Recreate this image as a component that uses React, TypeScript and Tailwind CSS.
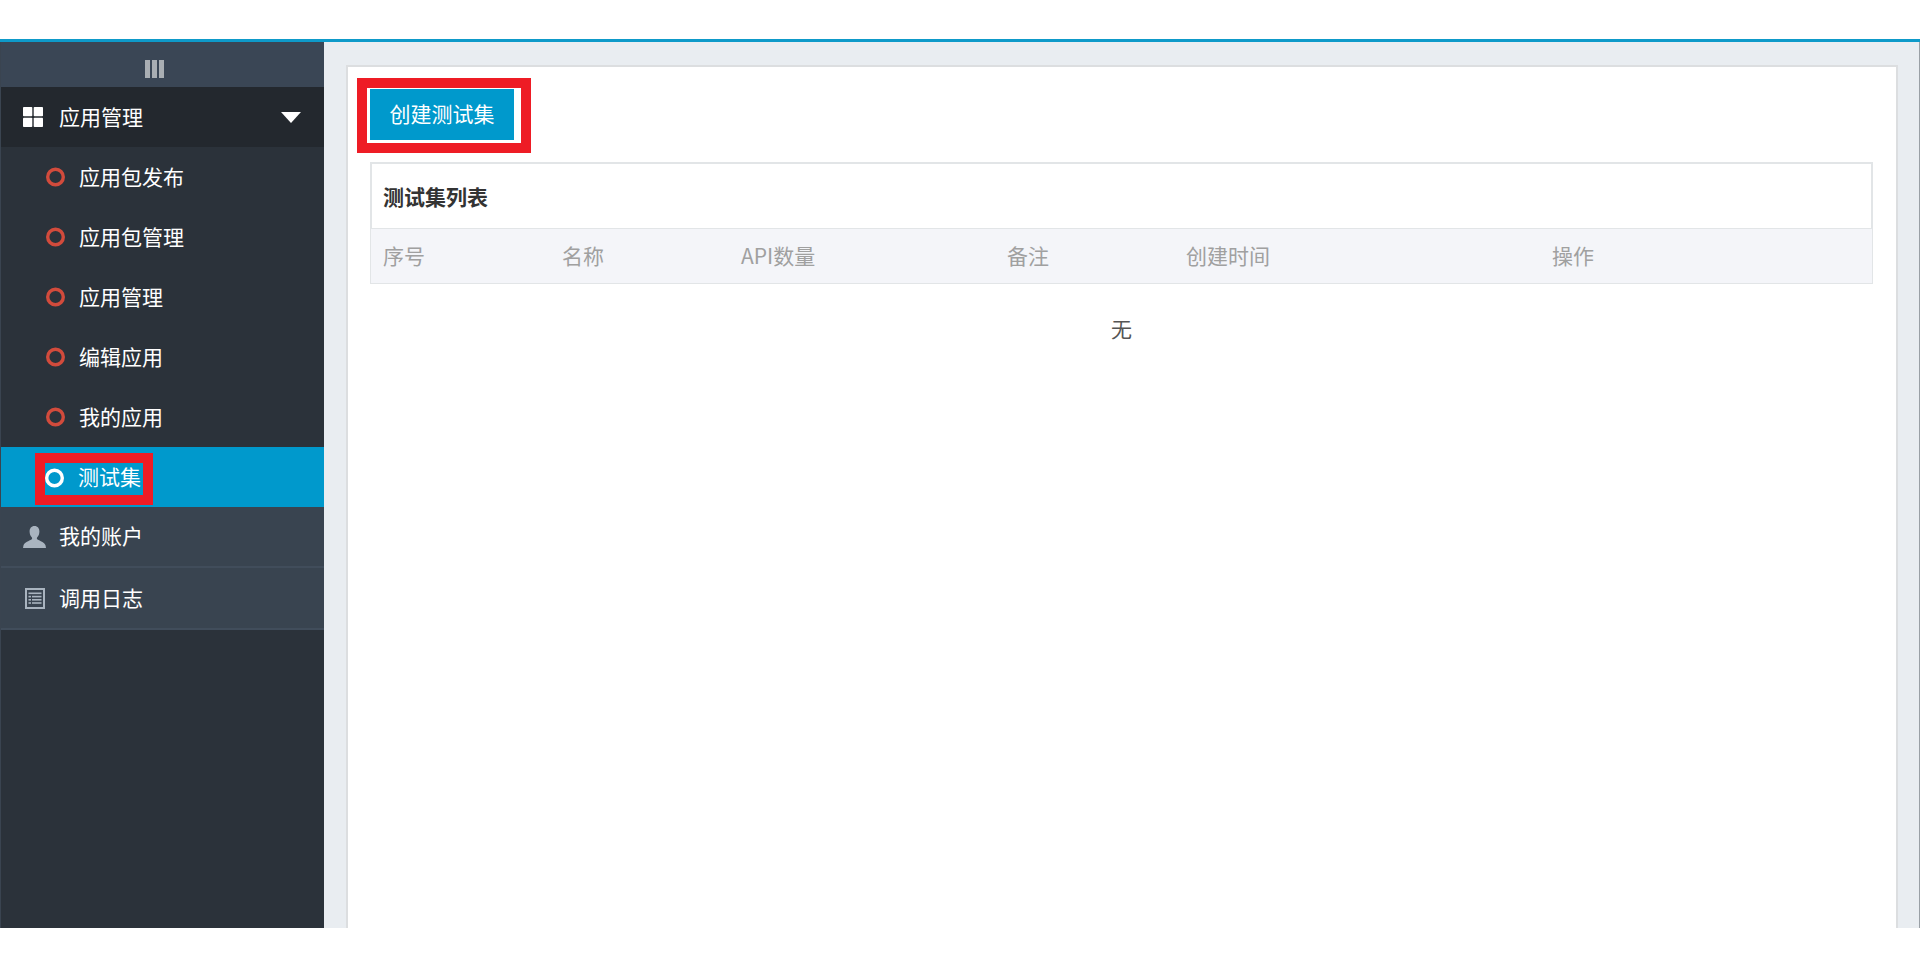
import React from "react";

const font = { fontFamily: '"Noto Sans CJK SC", "Noto Sans", sans-serif' };

const subItems = ["应用包发布", "应用包管理", "应用管理", "编辑应用", "我的应用"];
const columns = ["序号", "名称", "API数量", "备注", "创建时间", "操作"];

function Ring({ color }: { color: string }) {
  return (
    <svg width="20" height="20" viewBox="0 0 20 20" className="shrink-0">
      <circle cx="9.5" cy="10" r="7.8" fill="none" stroke={color} strokeWidth="3.4" />
    </svg>
  );
}

function GridIcon() {
  return (
    <svg width="20" height="20" viewBox="0 0 20 20" className="shrink-0" fill="#fff">
      <rect x="0" y="0" width="9.3" height="9.3" rx="0.8" />
      <rect x="10.7" y="0" width="9.3" height="9.3" rx="0.8" />
      <rect x="0" y="10.7" width="9.3" height="9.3" rx="0.8" />
      <rect x="10.7" y="10.7" width="9.3" height="9.3" rx="0.8" />
    </svg>
  );
}

function UserIcon() {
  return (
    <svg width="23" height="22" viewBox="0 0 23 22" className="shrink-0" fill="#a9b4bf">
      <path d="M11.5 0C8.3 0 6.6 2.4 6.6 5.6c0 2.4.9 4.6 2.3 6 .4.6.3 1.4-.4 1.9C6 15 1.6 16.2.5 19.2L0 22h23l-.5-2.8c-1.1-3-5.5-4.2-8-5.7-.7-.5-.8-1.3-.4-1.9 1.4-1.4 2.3-3.6 2.3-6C16.4 2.4 14.7 0 11.5 0z" />
    </svg>
  );
}

function ListIcon() {
  return (
    <svg width="20" height="21" viewBox="0 0 20 21" className="shrink-0" fill="none">
      <rect x="1" y="1" width="18" height="19" fill="none" stroke="#a9b4bf" strokeWidth="2" />
      <g fill="#a9b4bf">
        <rect x="3.5" y="4.5" width="13" height="1.6" />
        <rect x="3.5" y="7.8" width="2.5" height="1.6" />
        <rect x="7" y="7.8" width="9.5" height="1.6" />
        <rect x="3.5" y="11" width="2.5" height="1.6" />
        <rect x="7" y="11" width="9.5" height="1.6" />
        <rect x="3.5" y="14.2" width="2.5" height="1.6" />
        <rect x="7" y="14.2" width="9.5" height="1.6" />
      </g>
    </svg>
  );
}

function Sidebar() {
  return (
    <aside className="w-[324px] shrink-0 flex flex-col bg-[#2b323a] border-l border-[#3a4450]">
      <div className="h-[45px] flex items-center justify-center gap-[2px] bg-[#3a4655] pt-[8px] pr-[17px]">
        <span className="w-[5px] h-[18px] bg-[#a9aeb3]" />
        <span className="w-[5px] h-[18px] bg-[#a9aeb3]" />
        <span className="w-[5px] h-[18px] bg-[#a9aeb3]" />
      </div>

      <div className="h-[60px] flex items-center bg-[#23282e] pl-[22px] pr-[23px] text-white">
        <GridIcon />
        <span className="ml-[16px] pb-[2px] flex-1 text-[21px] leading-none">应用管理</span>
        <svg width="20" height="11" viewBox="0 0 20 11" fill="#fff">
          <path d="M0 0h20L10 11z" />
        </svg>
      </div>

      {subItems.map((label) => (
        <div key={label} className="h-[60px] flex items-center pl-[45px] text-white">
          <Ring color="#d24b3c" />
          <span className="ml-[13px] pb-[2px] text-[21px] leading-none">{label}</span>
        </div>
      ))}

      <div className="h-[60px] flex items-center pl-[34px] pt-[4px] bg-[#0099cc] text-white">
        <div className="flex items-center h-[52px] w-[118px] border-[10px] border-[#ee1c25] pb-[3px]">
          <Ring color="#fff" />
          <span className="ml-[13px] pb-[2px] text-[21px] leading-none whitespace-nowrap">测试集</span>
        </div>
      </div>

      <div className="h-[61px] flex items-center pl-[22px] bg-[#394450] border-b-2 border-[#414d5b] text-white">
        <UserIcon />
        <span className="ml-[13px] pb-[2px] text-[21px] leading-none">我的账户</span>
      </div>
      <div className="h-[62px] flex items-center pl-[24px] bg-[#394450] border-b-2 border-[#414d5b] text-white">
        <ListIcon />
        <span className="ml-[14px] pb-[2px] text-[21px] leading-none">调用日志</span>
      </div>
    </aside>
  );
}

function TestSetTable() {
  return (
    <div className="ml-[22px] mr-[23px] mt-[9px]">
      <div className="h-[66px] flex items-center pl-[11px] border-2 border-b-0 border-[#e2e5e7] bg-white">
        <h2 className="text-[21px] leading-none font-bold text-[#333]">测试集列表</h2>
      </div>
      <div className="h-[56px] pb-[2px] grid grid-cols-[179px_179px_266px_179px_366px_1fr] items-center pl-[12px] bg-[#f4f5f9] border border-[#e2e5e7] text-[21px] leading-none text-[#a0a0a0]">
        {columns.map((c) => (
          <span key={c}>{c}</span>
        ))}
      </div>
      <div className="h-[88px] flex items-center justify-center text-[21px] leading-none text-[#555]">无</div>
    </div>
  );
}

export default function App() {
  return (
    <div className="h-[966px] flex flex-col bg-white overflow-hidden" style={font}>
      <div className="h-[39px] shrink-0" />
      <div className="h-[889px] shrink-0 flex border-t-[3px] border-[#0e9ac9]">
        <Sidebar />
        <main className="flex-1 flex flex-col bg-[#e9edf1] pl-[22px] pt-[23px] pr-[21px] border-r border-[#9aa0a6]">
          <div className="flex-1 bg-white border-2 border-b-0 border-[#dcdee0]">
            <div className="pl-[9px] pt-[11px]">
              <div className="w-[174px] border-[10px] border-[#ee1c25] pl-[3px] pt-[1px] pb-[3px]">
                <button className="w-[144px] h-[51px] pb-[2px] bg-[#0099cc] text-white text-[21px] leading-none">创建测试集</button>
              </div>
            </div>
            <TestSetTable />
          </div>
        </main>
      </div>
    </div>
  );
}
